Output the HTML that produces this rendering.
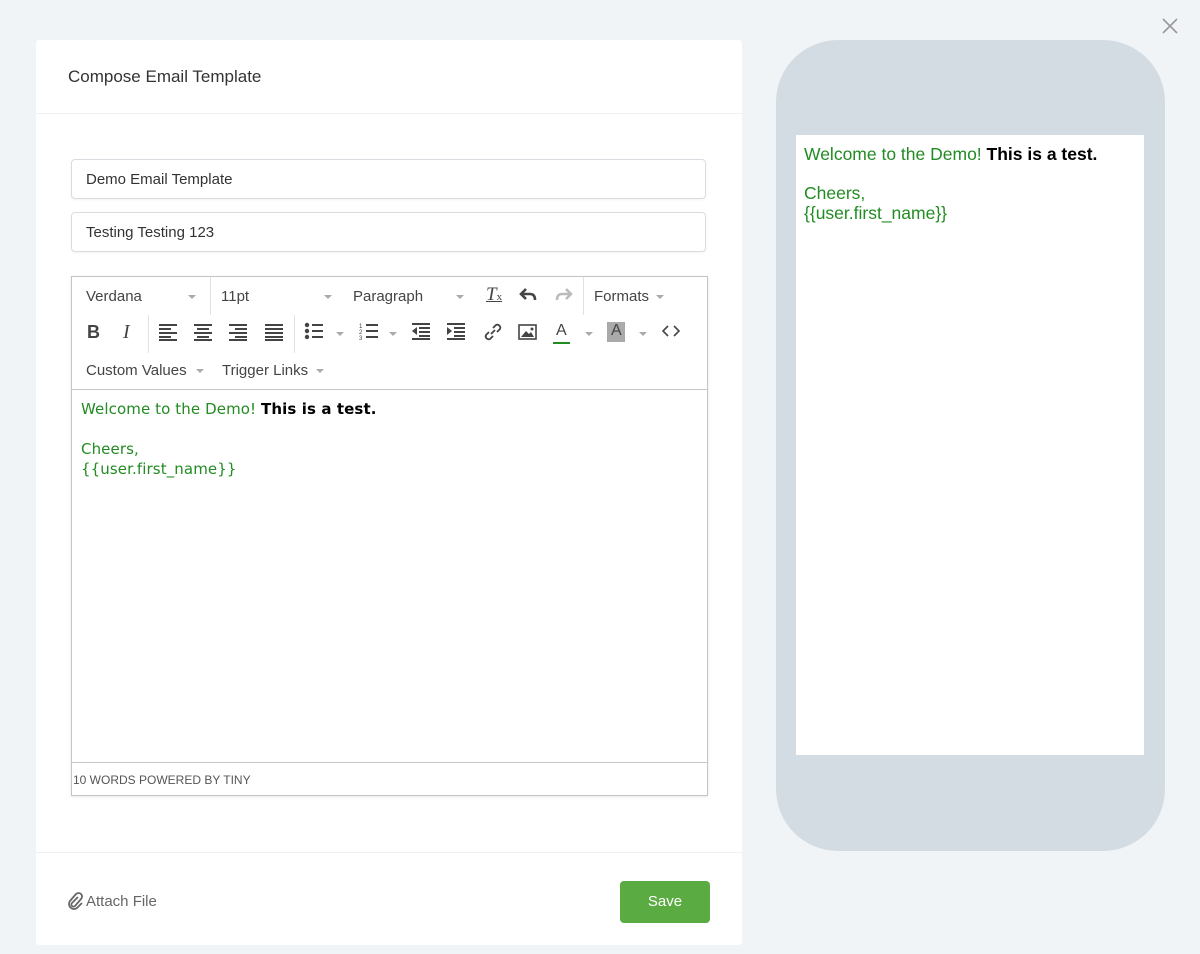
<!DOCTYPE html>
<html><head><style>
*{box-sizing:border-box;margin:0;padding:0}
body{width:1200px;height:954px;background:#f1f4f7;font-family:"Liberation Sans",sans-serif;position:relative;overflow:hidden;color:#333}
.card{position:absolute;left:36px;top:40px;width:706px;height:905px;background:#fff;border-radius:3px}
.hdr{position:absolute;left:0;top:0;width:100%;height:74px;border-bottom:1px solid #eef1f4;font-size:17px;color:#333;padding:27px 0 0 32px}
.inp{position:absolute;left:35px;width:635px;height:40px;border:1px solid #d9dde2;border-radius:4px;font-size:15px;padding:11px 14px;color:#333;box-shadow:0 1px 2px rgba(0,0,0,.05)}
.ed{position:absolute;left:35px;top:236px;width:637px;height:520px;border:1px solid #c5c5c5;box-shadow:0 1px 3px rgba(0,0,0,.1)}
.tb{position:absolute;left:0;top:0;width:100%;height:113px;border-bottom:1px solid #c5c5c5}
.t{position:absolute;font-size:15px;color:#444;white-space:nowrap}
.c{display:inline-block;width:0;height:0;border-left:4px solid transparent;border-right:4px solid transparent;border-top:4px solid #aaa;vertical-align:middle;margin-left:6px}
.sep{position:absolute;width:1px;background:#e2e2e2}
.content{position:absolute;left:9px;top:122px;font-family:"DejaVu Sans",sans-serif;font-size:15px;line-height:20px;color:#228b22;letter-spacing:0.1px}
.content b{color:#000}
.st{position:absolute;left:0;bottom:0;width:100%;height:33px;border-top:1px solid #c5c5c5;font-size:12px;color:#555;padding:10px 0 0 1px}
.ftr{position:absolute;left:0;top:812px;width:100%;height:1px;background:#eef1f4}
.save{position:absolute;left:584px;top:841px;width:90px;height:42px;background:#5aab41;border-radius:4px;color:#fff;font-size:15px;text-align:center;line-height:42px}
.phone{position:absolute;left:776px;top:40px;width:389px;height:811px;background:#d4dce3;border-radius:62px}
.screen{position:absolute;left:20px;top:95px;width:348px;height:620px;background:#fff;padding:10px 8px;font-size:17.5px;line-height:19.5px;color:#228b22}
.screen b{color:#000}
svg{position:absolute}
</style></head><body>
<svg style="left:1161px;top:17px" width="18" height="18"><path d="M2 2L16 16M16 2L2 16" stroke="#999" stroke-width="1.6"/></svg>
<div class="card">
<div class="hdr">Compose Email Template</div>
<div class="inp" style="top:119px">Demo Email Template</div>
<div class="inp" style="top:172px">Testing Testing 123</div>
<div class="ed">
<div class="tb">
<div class="t" style="left:14px;top:11px">Verdana</div><span class="c" style="position:absolute;left:110px;top:18px"></span>
<div class="sep" style="left:138px;top:0;height:38px"></div>
<div class="t" style="left:149px;top:11px">11pt</div><span class="c" style="position:absolute;left:246px;top:18px"></span>
<div class="t" style="left:281px;top:11px">Paragraph</div><span class="c" style="position:absolute;left:378px;top:18px"></span>
<div class="t" style="left:414px;top:7px;font-family:'Liberation Serif';font-style:italic;font-size:19px;text-decoration:underline">T<span style="font-size:11px;font-style:normal">x</span></div>
<svg style="left:447px;top:10px" width="18" height="16"><path d="M7 2L2 7L7 12M2 7H11Q16 7 16 13" fill="none" stroke="#444" stroke-width="2.6"/></svg>
<svg style="left:483px;top:10px" width="18" height="16"><path d="M11 2L16 7L11 12M16 7H7Q2 7 2 13" fill="none" stroke="#bbb" stroke-width="2.6"/></svg>
<div class="sep" style="left:511px;top:0;height:38px"></div>
<div class="t" style="left:522px;top:11px">Formats</div><span class="c" style="position:absolute;left:578px;top:18px"></span>
<div class="t" style="left:15px;top:45px;font-weight:bold;font-size:18px">B</div>
<div class="t" style="left:51px;top:44px;font-family:'Liberation Serif';font-style:italic;font-size:20px">I</div>
<div class="sep" style="left:76px;top:38px;height:38px"></div>
<svg style="left:87px;top:47px" width="210" height="18" fill="#444">
<rect x="0" y="0" width="18" height="2"/><rect x="0" y="4" width="12" height="2"/><rect x="0" y="8" width="18" height="2"/><rect x="0" y="12" width="12" height="2"/><rect x="0" y="15" width="18" height="2"/>
<rect x="35" y="0" width="18" height="2"/><rect x="38" y="4" width="12" height="2"/><rect x="35" y="8" width="18" height="2"/><rect x="38" y="12" width="12" height="2"/><rect x="35" y="15" width="18" height="2"/>
<rect x="70" y="0" width="18" height="2"/><rect x="76" y="4" width="12" height="2"/><rect x="70" y="8" width="18" height="2"/><rect x="76" y="12" width="12" height="2"/><rect x="70" y="15" width="18" height="2"/>
<rect x="106" y="0" width="18" height="2"/><rect x="106" y="4" width="18" height="2"/><rect x="106" y="8" width="18" height="2"/><rect x="106" y="12" width="18" height="2"/><rect x="106" y="15" width="18" height="2"/>
</svg>
<div class="sep" style="left:222px;top:38px;height:38px"></div>
<svg style="left:232px;top:45px" width="20" height="20" fill="#444"><circle cx="3" cy="3" r="2.2"/><circle cx="3" cy="9" r="2.2"/><circle cx="3" cy="15" r="2.2"/><rect x="8" y="2" width="11" height="2"/><rect x="8" y="8" width="11" height="2"/><rect x="8" y="14" width="11" height="2"/></svg>
<span class="c" style="position:absolute;left:258px;top:55px"></span>
<svg style="left:287px;top:45px" width="20" height="20" fill="#444"><text x="0" y="6" font-size="6">1</text><text x="0" y="12" font-size="6">2</text><text x="0" y="18" font-size="6">3</text><rect x="7" y="2" width="12" height="2"/><rect x="7" y="8" width="12" height="2"/><rect x="7" y="14" width="12" height="2"/></svg>
<span class="c" style="position:absolute;left:311px;top:55px"></span>
<svg style="left:340px;top:46px" width="56" height="18" fill="#444"><rect x="0" y="0" width="18" height="2"/><rect x="7" y="4" width="11" height="2"/><rect x="7" y="8" width="11" height="2"/><rect x="7" y="12" width="11" height="2"/><rect x="0" y="15" width="18" height="2"/><path d="M5 4L0 8L5 12Z"/>
<rect x="35" y="0" width="18" height="2"/><rect x="42" y="4" width="11" height="2"/><rect x="42" y="8" width="11" height="2"/><rect x="42" y="12" width="11" height="2"/><rect x="35" y="15" width="18" height="2"/><path d="M35 4L40 8L35 12Z"/></svg>
<svg style="left:411px;top:45px" width="20" height="20"><path d="M8 12L12 8M6 10L3 13a3 3 0 0 0 4 4l3-3M14 10l3-3a3 3 0 0 0-4-4l-3 3" fill="none" stroke="#444" stroke-width="1.8"/></svg>
<svg style="left:446px;top:47px" width="20" height="16"><rect x="1" y="1" width="17" height="14" fill="none" stroke="#444" stroke-width="1.6"/><path d="M3 13L8 7L11 10L13 8L16 13Z" fill="#444"/><circle cx="14" cy="5" r="1.5" fill="#444"/></svg>
<div class="t" style="left:484px;top:45px;font-size:16px">A</div><div style="position:absolute;left:481px;top:65px;width:17px;height:2px;background:#228b22"></div>
<span class="c" style="position:absolute;left:507px;top:55px"></span>
<div style="position:absolute;left:535px;top:45px;width:18px;height:20px;background:#aaa"></div><div class="t" style="left:539px;top:45px;font-size:16px">A</div>
<span class="c" style="position:absolute;left:561px;top:55px"></span>
<svg style="left:590px;top:48px" width="18" height="12"><path d="M6 1L1 6L6 11M12 1L17 6L12 11" fill="none" stroke="#444" stroke-width="1.6"/></svg>
<div class="t" style="left:14px;top:85px">Custom Values</div><span class="c" style="position:absolute;left:118px;top:92px"></span>
<div class="t" style="left:150px;top:85px">Trigger Links</div><span class="c" style="position:absolute;left:238px;top:92px"></span>
</div>
<div class="content">Welcome to the Demo! <b>This is a test.</b><br><br>Cheers,<br>{{user.first_name}}</div>
<div class="st">10 WORDS POWERED BY TINY</div>
</div>
<div class="ftr"></div>
<svg style="left:31px;top:852px" width="16" height="18"><path d="M11 5L5 11a2 2 0 0 0 3 3l6-7a3.5 3.5 0 0 0-5-5L3 9a5 5 0 0 0 7 7l5-5" fill="none" stroke="#666" stroke-width="1.8"/></svg>
<div class="t" style="left:50px;top:853px;color:#666">Attach File</div>
<div class="save">Save</div>
</div>
<div class="phone"><div class="screen">Welcome to the Demo! <b>This is a test.</b><br><br>Cheers,<br>{{user.first_name}}</div></div>
</body></html>
